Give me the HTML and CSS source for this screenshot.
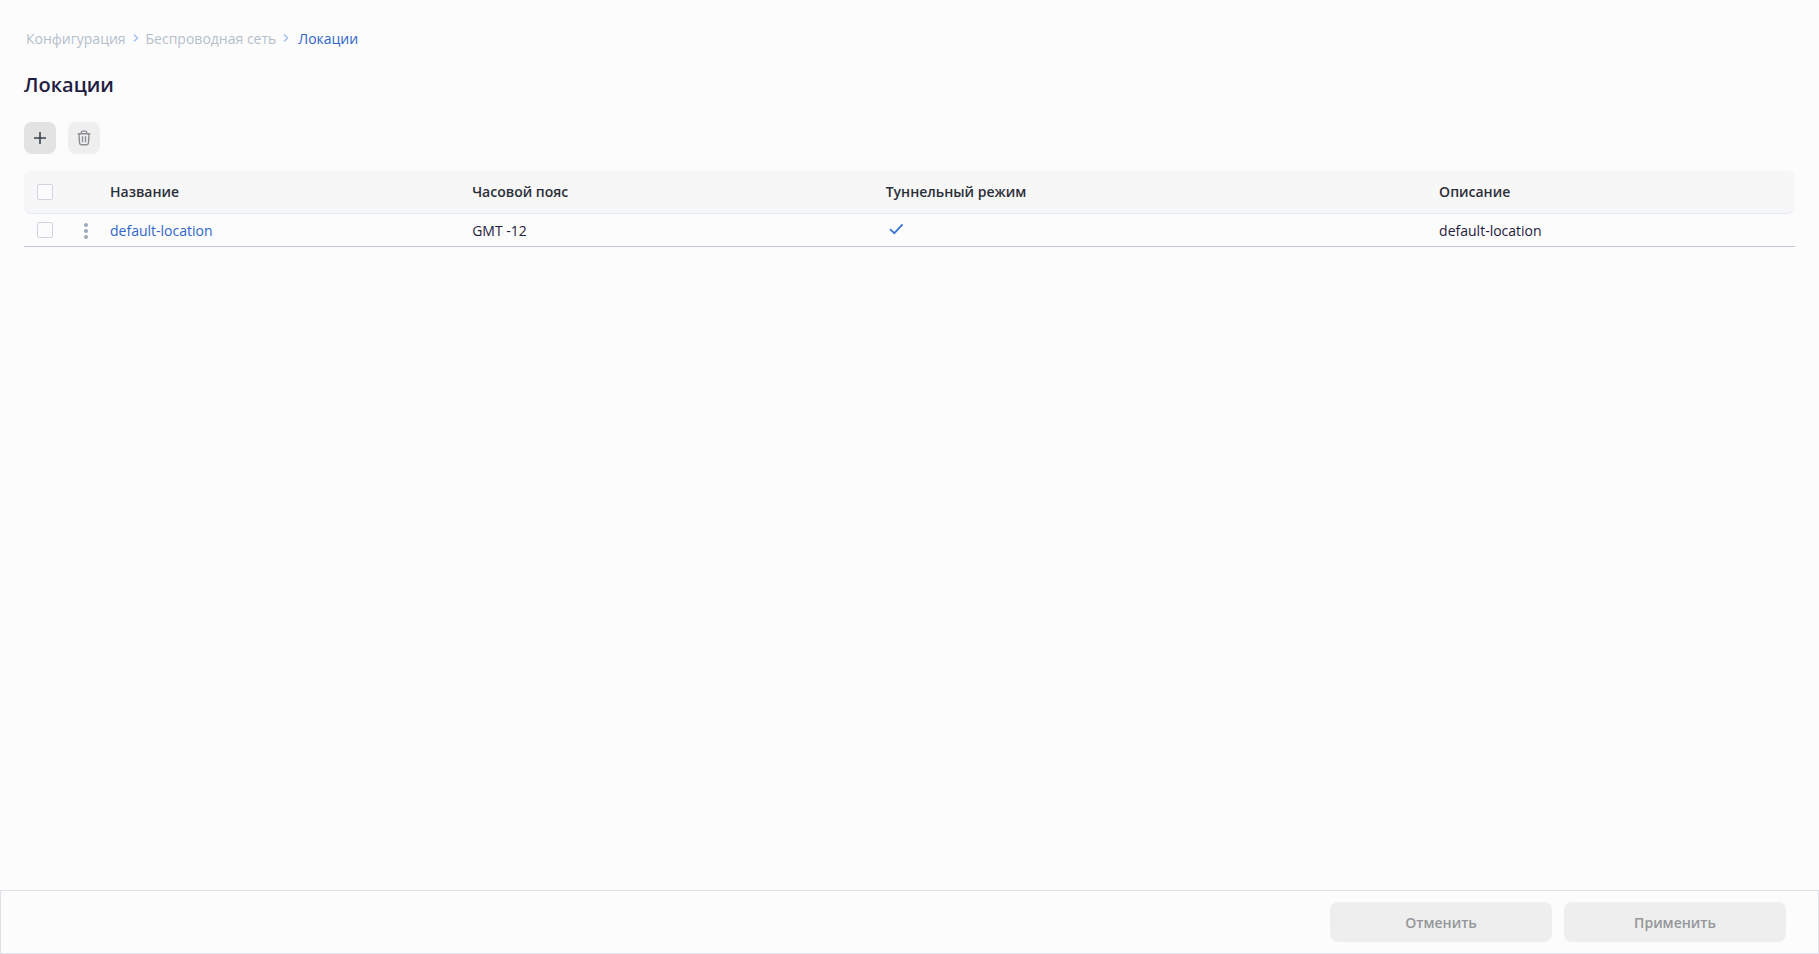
FILE: index.html
```html
<!DOCTYPE html>
<html lang="ru">
<head>
    <meta charset="utf-8">
    <title>Локации</title>
    <link rel="stylesheet" href="styles.css">
</head>
<body>
    <main class="content">
        <nav class="breadcrumbs">
            <a href="#">Конфигурация</a>
            <svg class="chevron" width="6" height="10" viewBox="0 0 6 10"><path d="M1 .5 4.5 4 1 7.5"/></svg>
            <a href="#">Беспроводная сеть</a>
            <svg class="chevron" width="6" height="10" viewBox="0 0 6 10"><path d="M1 .5 4.5 4 1 7.5"/></svg>
            <a href="#" class="current">Локации</a>
        </nav>

        <h1>Локации</h1>

        <div class="toolbar">
            <button type="button" class="icon-btn" aria-label="Добавить">
                <svg width="16" height="16" viewBox="0 0 16 16"><path d="M8 2v12M2 8h12" stroke="#3a414c" stroke-width="1.6"/></svg>
            </button>
            <button type="button" class="icon-btn" aria-label="Удалить" disabled>
                <svg width="16" height="16" viewBox="0 0 16 16" fill="none" stroke="#8c8f94" stroke-width="1.4">
                    <path d="M1.7 3.7h12.6M5.3 3.5V2.4Q5.3 1.1 6.6 1.1h2.8q1.3 0 1.3 1.3v1.1"/>
                    <path d="M3 3.8l.5 9q.1 1.9 1.9 1.9h5.2q1.8 0 1.9-1.9l.5-9"/>
                    <path d="M6.5 6.2v6M9.5 6.2v6"/>
                </svg>
            </button>
        </div>

        <table class="locations">
            <colgroup>
                <col class="col-check">
                <col class="col-menu">
                <col class="col-name">
                <col class="col-zone">
                <col class="col-tunnel">
                <col>
            </colgroup>
            <thead>
                <tr>
                    <th class="check"><input type="checkbox" aria-label="Выбрать все"></th>
                    <th></th>
                    <th>Название</th>
                    <th>Часовой пояс</th>
                    <th>Туннельный режим</th>
                    <th>Описание</th>
                </tr>
            </thead>
            <tbody>
                <tr>
                    <td class="check"><input type="checkbox" aria-label="Выбрать default-location"></td>
                    <td class="menu">
                        <button type="button" class="menu-btn" aria-label="Действия">
                            <svg width="4" height="16" viewBox="0 0 4 16"><circle cx="2" cy="2" r="2"/><circle cx="2" cy="8" r="2"/><circle cx="2" cy="14" r="2"/></svg>
                        </button>
                    </td>
                    <td><a href="#">default-location</a></td>
                    <td>GMT -12</td>
                    <td><svg class="tick" width="20" height="16" viewBox="0 0 20 16"><path d="M4 6.2l4.3 4L16.6 1.4"/></svg></td>
                    <td>default-location</td>
                </tr>
            </tbody>
        </table>
    </main>

    <footer class="actions">
        <button type="button" disabled>Отменить</button>
        <button type="button" disabled>Применить</button>
    </footer>
</body>
</html>
```
FILE: styles.css
```css
* {
    box-sizing: border-box;
}

body {
    display: flex;
    flex-direction: column;
    min-height: 100vh;
    margin: 0;
    background: #fcfcfc;
    color: #1f2041;
    font-family: "Open Sans", "Noto Sans", sans-serif;
    font-size: 14px;
    line-height: 20px;
}

a {
    color: #2e66c9;
    text-decoration: none;
}

button {
    border: none;
    border-radius: 8px;
    padding: 0;
    font: inherit;
    cursor: pointer;
}

button:disabled {
    cursor: default;
}

.content {
    flex: 1;
    padding: 29px 24px;
}

/* Breadcrumbs */
.breadcrumbs {
    display: flex;
    align-items: center;
    gap: 7px;
    padding-left: 2px;
}

.breadcrumbs a {
    color: #b5bfcc;
}

.breadcrumbs .current {
    margin-left: 2px;
    color: #2e66c9;
}

.chevron {
    fill: none;
    stroke: #a3c2f5;
    stroke-width: 1.5;
}

h1 {
    margin: 23px 0 24px;
    font-size: 20px;
    font-weight: 600;
    line-height: 26px;
}

/* Toolbar */
.toolbar {
    display: flex;
    gap: 12px;
    margin-bottom: 16px;
}

.icon-btn {
    display: flex;
    align-items: center;
    justify-content: center;
    width: 32px;
    height: 32px;
    background: #e3e3e3;
}

.icon-btn:disabled {
    background: #efefef;
}

/* Table */
.locations {
    width: 100%;
    table-layout: fixed;
    border-collapse: separate;
    border-spacing: 0;
}

.col-check {
    width: 44px;
}

.col-menu {
    width: 36px;
}

.col-name {
    width: 20.45%;
}

.col-zone {
    width: 23.35%;
}

.col-tunnel {
    width: 31.25%;
}

th,
td {
    padding: 0 6px;
    text-align: left;
    vertical-align: middle;
}

th {
    height: 44px;
    background: #f7f7f7;
    border-bottom: 1px solid #e3edfa;
    color: #2b2f38;
    font-weight: 600;
}

th:first-child {
    border-radius: 8px 0 0 8px;
}

th:last-child {
    border-radius: 0 8px 8px 0;
}

td {
    height: 33px;
    padding-top: 2px;
    border-bottom: 1px solid #c0c8d2;
}

.check {
    padding-top: 0;
    padding-left: 13px;
}

.check input {
    appearance: none;
    display: block;
    width: 16px;
    height: 16px;
    margin: 0;
    border: 1px solid #cfd5de;
    border-radius: 2px;
    background: #fcfcfc;
}

.check input:checked {
    background: #2e66c9;
}

.menu {
    padding-left: 0;
    padding-right: 0;
}

.menu-btn {
    display: block;
    width: 36px;
    height: 16px;
    background: none;
}

.menu-btn svg {
    display: block;
    margin: 0 auto;
    fill: #9ba8b8;
}

.tick {
    display: block;
    fill: none;
    stroke: #3c73d6;
    stroke-width: 1.8;
}

/* Bottom bar */
.actions {
    display: flex;
    justify-content: flex-end;
    gap: 12px;
    padding: 11px 32px;
    border: 1px solid #dfe3e9;
}

.actions button {
    width: 222px;
    height: 40px;
    padding-top: 2px;
    background: #eee;
    color: #949699;
    font-weight: 600;
}
```
